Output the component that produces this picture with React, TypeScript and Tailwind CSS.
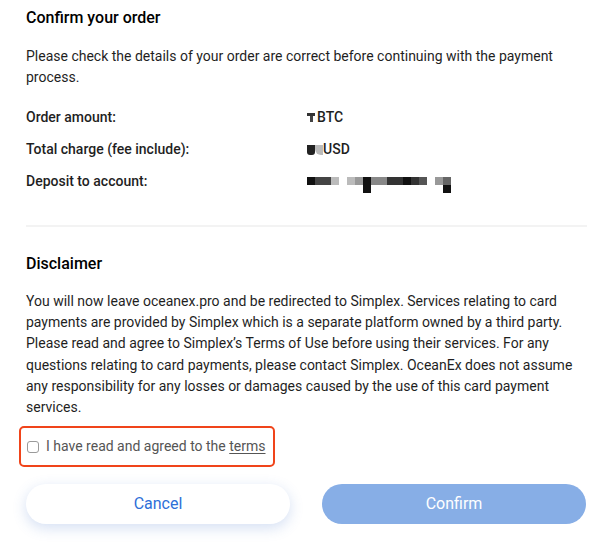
import React, { useState } from 'react';

const blocks: { w: number; c: string; tail?: string }[] = [
  { w: 8, c: '#111' },
  { w: 16, c: '#444' },
  { w: 8, c: '#bbb' },
  { w: 8, c: 'transparent' },
  { w: 8, c: '#bbb' },
  { w: 8, c: '#999' },
  { w: 8, c: '#111', tail: '#111' },
  { w: 16, c: '#888' },
  { w: 16, c: '#333' },
  { w: 8, c: '#111' },
  { w: 8, c: '#333' },
  { w: 8, c: '#555' },
  { w: 8, c: 'transparent' },
  { w: 8, c: '#999' },
  { w: 8, c: '#666', tail: '#111' },
];

function Row({ label, children }: { label: string; children: React.ReactNode }) {
  return (
    <div className="flex items-center h-[21px]">
      <div className="w-[281px] shrink-0">{label}</div>
      <div className="flex items-center">{children}</div>
    </div>
  );
}

export default function App() {
  const [agreed, setAgreed] = useState(false);

  return (
    <div
      className="w-[613px] h-[543px] bg-white text-[#1f1f1f] px-[26px] pt-[6px] overflow-hidden"
      style={{ fontFamily: 'Roboto, "Liberation Sans", sans-serif' }}
    >
      <h2 className="text-[16px] leading-[24px] font-medium text-black">Confirm your order</h2>
      <p className="mt-[16px] text-[14px] leading-[21px]">
        Please check the details of your order are correct before continuing with the payment process.
      </p>

      <div className="mt-[19px] flex flex-col gap-[11px] text-[14px] font-medium">
        <Row label="Order amount:">
          <span className="flex flex-col items-center mr-[2px]">
            <span className="w-[8px] h-[3px] bg-[#333]" />
            <span className="w-[3px] h-[6px] bg-[#444]" />
          </span>
          <span>BTC</span>
        </Row>
        <Row label="Total charge (fee include):">
          <span className="w-[8px] h-[10px] bg-[#222] rounded-b-[3px]" />
          <span className="w-[8px] h-[10px] bg-[#bbb] rounded-bl-[6px]" />
          <span>USD</span>
        </Row>
        <Row label="Deposit to account:">
          <div className="flex items-start h-[16px] pt-[3px]">
            {blocks.map((b, i) => (
              <span key={i} className="flex flex-col" style={{ width: b.w }}>
                <span className="h-[8px]" style={{ background: b.c }} />
                {b.tail && <span className="h-[8px] w-[8px] self-end" style={{ background: b.tail }} />}
              </span>
            ))}
          </div>
        </Row>
      </div>

      <div className="mt-[33px] h-[2px] bg-[#f3f3f3]" />

      <h2 className="mt-[25px] text-[16px] leading-[24px] font-medium text-black">Disclaimer</h2>
      <p className="mt-[15px] text-[14px] leading-[21.2px]">
        You will now leave oceanex.pro and be redirected to Simplex. Services relating to card payments are provided by
        Simplex which is a separate platform owned by a third party. Please read and agree to Simplex’s Terms of Use
        before using their services. For any questions relating to card payments, please contact Simplex. OceanEx does
        not assume any responsibility for any losses or damages caused by the use of this card payment services.
      </p>

      <label className="mt-[8px] -ml-[7px] flex items-center w-[256px] h-[41px] border-2 border-[#f0441a] rounded-[5px] pl-[6px] cursor-pointer">
        <input
          type="checkbox"
          checked={agreed}
          onChange={(e) => setAgreed(e.currentTarget.checked)}
          className="appearance-none w-[12px] h-[12px] border border-[#9a9a9a] rounded-[3px] bg-white checked:bg-[#3f7be0]"
        />
        <span className="ml-[7px] text-[14px] text-[#555]">
          I have read and agreed to the <span className="underline underline-offset-2">terms</span>
        </span>
      </label>

      <div className="mt-[17px] flex gap-[32px]">
        <button className="w-[264px] h-[40px] rounded-full bg-white text-[#2e6fd8] text-[16px] shadow-[0_4px_14px_rgba(60,110,200,0.22)]">
          Cancel
        </button>
        <button
          disabled={!agreed}
          className="w-[264px] h-[40px] rounded-full bg-[#87aee6] text-white text-[16px]"
        >
          Confirm
        </button>
      </div>
    </div>
  );
}
